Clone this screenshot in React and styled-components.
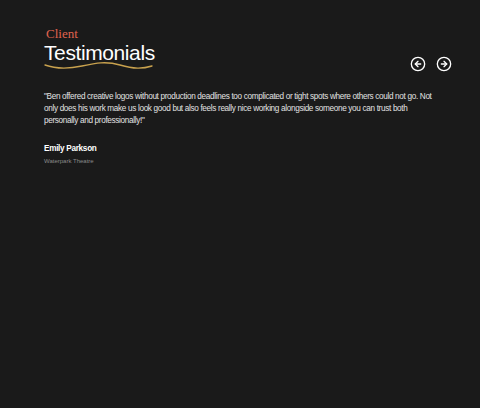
import React from "react";
import styled, { createGlobalStyle } from "styled-components";
import { CircleArrowLeft, CircleArrowRight } from "lucide-react";

const GlobalStyle = createGlobalStyle`
  html, body {
    margin: 0;
    padding: 0;
    background: #1a1a1a;
  }
  body {
    font-family: "Liberation Sans", Arial, sans-serif;
    min-height: 408px;
  }
`;

function Main() {
  return (
    <Wrapper>
      <GlobalStyle />
      <Header>
        <Title>
          <span className="small">Client</span>
          <h2>Testimonials</h2>
          <svg width="110" height="10" viewBox="0 0 110 10">
            <path
              d="M1 5 C 12 9, 24 9, 38 6 S 62 1, 76 5 S 98 9, 108 6"
              stroke="#c9a24e"
              strokeWidth="1.4"
              fill="none"
              strokeLinecap="round"
            />
          </svg>
        </Title>
        <Controls>
          <button aria-label="previous">
            <CircleArrowLeft size={16} strokeWidth={2} />
          </button>
          <button aria-label="next">
            <CircleArrowRight size={16} strokeWidth={2} />
          </button>
        </Controls>
      </Header>
      <Quote>
        "Ben offered creative logos without production deadlines too complicated or tight spots where
        others could not go. Not only does his work make us look good but also feels really nice
        working alongside someone you can trust both personally and professionally!"
      </Quote>
      <Author>Emily Parkson</Author>
      <Company>Waterpark Theatre</Company>
    </Wrapper>
  );
}

const Wrapper = styled.div`
  padding: 26px 28px 0 44px;
  color: #fff;
`;

const Header = styled.div`
  display: flex;
  justify-content: space-between;
  align-items: flex-end;
`;

const Title = styled.div`
  display: flex;
  flex-direction: column;
  .small {
    font-family: "Liberation Serif", "Times New Roman", serif;
    font-size: 13px;
    color: #e0634f;
    margin-left: 2px;
    line-height: 16px;
  }
  h2 {
    margin: 0;
    font-weight: 400;
    font-size: 21px;
    letter-spacing: -0.4px;
    line-height: 21px;
    color: #fff;
  }
  svg {
    margin: -3px 0 2px;
    display: block;
  }
`;

const Controls = styled.div`
  display: flex;
  gap: 10px;
  margin-bottom: 0;
  button {
    background: none;
    border: 0;
    padding: 0;
    color: #fff;
    display: flex;
    cursor: pointer;
  }
`;

const Quote = styled.p`
  margin: 19px 0 0;
  max-width: 390px;
  font-size: 8.2px;
  letter-spacing: -0.33px;
  line-height: 12px;
  color: #e2e2e2;
`;

const Author = styled.div`
  margin-top: 17px;
  font-weight: 700;
  font-size: 8.2px;
  letter-spacing: -0.3px;
  color: #fff;
`;

const Company = styled.div`
  margin-top: 5px;
  font-size: 6px;
  color: #8a8a8a;
`;

export default Main;
